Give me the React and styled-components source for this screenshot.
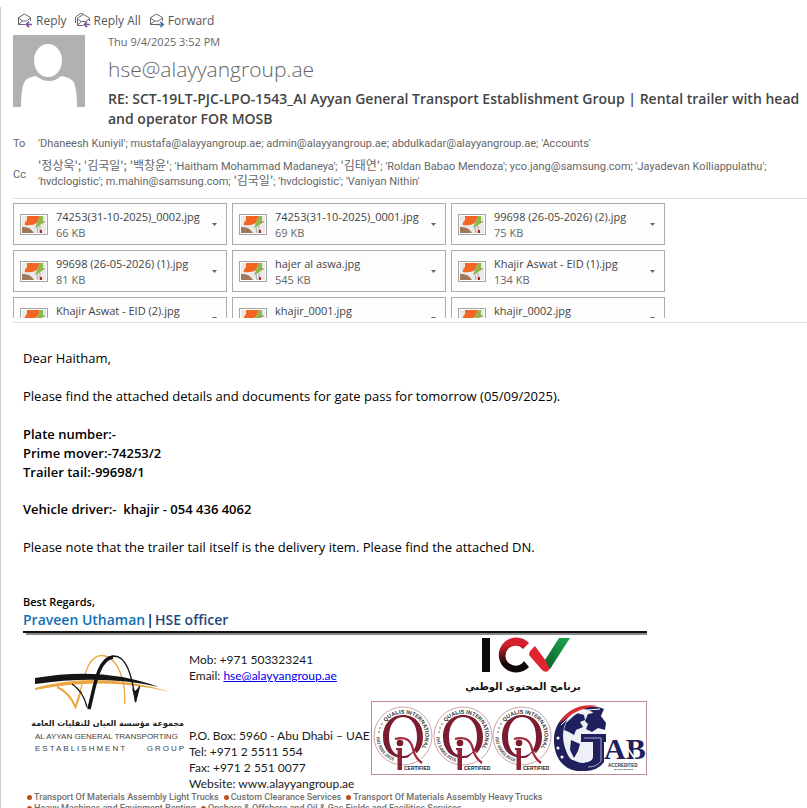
import React from "react";
import styled, { createGlobalStyle } from "styled-components";

const Global = createGlobalStyle`
  * { box-sizing: border-box; }
  body { margin: 0; background: #fff; overflow: hidden; }
  button { font: inherit; color: inherit; background: none; border: 0; padding: 0; cursor: pointer; }
`;
const ui = `"Open Sans", "Noto Sans", sans-serif`;

const Pane = styled.main`
  height: 100vh;
  overflow: hidden;
  padding-top: 7px;
  background: linear-gradient(#cfcfcf, #cfcfcf) 0 7px / 1px 100% no-repeat #fff;
  font-family: ${ui};
  color: #666;
`;
const Toolbar = styled.div`
  display: flex;
  gap: 8px;
  padding: 4px 0 0 17px;
  height: 26px;
`;
const Action = styled.button`
  display: flex;
  align-items: center;
  gap: 3px;
  height: 18px;
  && { font-size: 12px; color: #555; }
`;
const Head = styled.header`
  display: flex;
  gap: 23px;
  padding: 2px 0 0 13px;
`;
const Avatar = styled.svg`
  flex: none;
  width: 72px;
  height: 72px;
`;
const Info = styled.div`
  flex: 1;
  min-width: 0;
`;
const Stamp = styled.div`
  font-size: 11px;
  line-height: 14px;
`;
const Sender = styled.div`
  font: 300 21px/28px ${ui};
  margin: 6px 0;
`;
const Subject = styled.h1`
  margin: 0;
  font: 600 14px/20px ${ui};
  color: #444;
`;
const Recipients = styled.dl`
  display: grid;
  grid-template-columns: 25px 1fr;
  align-items: center;
  row-gap: 8px;
  margin: 0;
  padding: 7px 40px 9px 13px;
  font: 11px/15px Roboto, "Noto Sans CJK KR", sans-serif;
  dd { margin: 0; }
`;
const Korean = styled.span`
  font: 12px/0 "Noto Sans CJK KR", sans-serif;
`;
const Attachments = styled.section`
  margin-left: 13px;
  border-top: 1px solid #e1e1e1;
  border-bottom: 1px solid #e1e1e1;
  height: 125px;
  padding: 4px 0;
`;
const Files = styled.div`
  display: grid;
  grid-template-columns: repeat(3, 214px);
  gap: 5px;
  height: 115px;
  overflow: hidden;
`;
const File = styled.div`
  display: flex;
  align-items: center;
  height: 42px;
  padding: 0 9px 0 6px;
  border: 1px solid #ababab;
  background: #fdfdfd;
`;
const Thumbnail = styled.svg`
  flex: none;
  width: 28px;
  height: 21px;
`;
const FileText = styled.div`
  flex: 1;
  margin-left: 8px;
  padding-top: 2px;
  font: 11px/16px ${ui};
  white-space: nowrap;
`;
const FileName = styled.div`
  color: #444;
`;
const Menu = styled.button`
  display: flex;
`;
const Body = styled.article`
  padding: 26px 23px 0;
  font: 13px/19px ${ui};
  color: #000;
`;
const Para = styled.p`
  margin: 0 0 ${(p) => p.$after ?? 19}px;
  font-weight: ${(p) => (p.$bold ? 600 : 400)};
  white-space: pre-wrap;
`;
const Regards = styled.p`
  margin: 0;
  font: 600 11px/18px ${ui};
`;
const Signer = styled.p`
  margin: 0;
  font: 600 14px/18px ${ui};
  color: #1f497d;
`;
const SignerName = styled.span`
  color: #0f70b7;
`;
const Divider = styled.span`
  margin: 0 1px;
  color: #000;
`;
const Card = styled.section`
  max-width: 624px;
  margin-top: 2px;
  border-top: 2px solid #111;
`;
const Rule = styled.div`
  margin-left: 3px;
  border-top: 2px solid #8a8a8a;
`;
const CardRow = styled.div`
  display: grid;
  grid-template-columns: 166px 182px 1fr;
  height: 157px;
`;
const Brand = styled.div`
  padding-left: 12px;
  white-space: nowrap;
  color: #444;
  font: 8px/12px "Liberation Sans", sans-serif;
`;
const BrandMark = styled.svg`
  display: block;
  width: 140px;
  height: 82px;
`;
const BrandArabic = styled.div`
  width: 149px;
  font: 700 8px/14px "DejaVu Sans", sans-serif;
  color: #222;
`;
const BrandLetters = styled.div`
  display: flex;
  justify-content: space-between;
  width: 151px;
  letter-spacing: 2px;
`;
const Contact = styled.address`
  display: flex;
  flex-direction: column;
  justify-content: space-between;
  padding-top: 17px;
  font: 12px/16px Lato, sans-serif;
  white-space: nowrap;
  color: #1a1a1a;
  a { color: #0000ee; }
`;
const Badges = styled.svg`
  width: 276px;
  height: 156px;
`;
const Services = styled.ul`
  list-style: none;
  display: flex;
  flex-wrap: wrap;
  column-gap: 5px;
  margin: 0;
  padding: 0 0 0 4px;
  font: 500 9px/11px Roboto, sans-serif;
  color: #707070;
`;
const Service = styled.li`
  display: flex;
  align-items: center;
  gap: 2px;
  white-space: nowrap;
  &::before {
    content: "";
    width: 5px;
    height: 5px;
    border-radius: 50%;
    background: #c0501a;
  }
`;

function Envelope({ all, color, forward }) {
  return (
    <svg width="16" height="16" viewBox="0 0 16 16" fill="none" stroke="#666" aria-hidden="true">
      {all && <path d="M0.5 11V5L5.5 1.5L8.5 2" />}
      <path d={all ? "M8 13.5H2.5V6L8.5 2.5L14.5 6V9M2.5 7L6.5 9.5H10.5L14.5 7M2.5 13L6.5 9.5" : "M8 12.5H1.5V5.5L7.5 2L13.5 5.5V9M1.5 6L5.5 9H9.5L13.5 6M1.5 12.5L5.5 9"} />
      <path stroke={color} strokeWidth="1.7" d={forward ? "M8 12.5H14M11.5 9.8L14.2 12.5L11.5 15.2" : "M9.5 12.5H15M12 9.8L9.3 12.5L12 15.2"} />
    </svg>
  );
}

function Thumb() {
  return (
    <Thumbnail viewBox="0 0 28 21" aria-hidden="true">
      <rect x=".5" y=".5" width="27" height="20" fill="#fff" stroke="#a5a5a5" />
      <rect x="2" y="2" width="24" height="17" fill="#eceae8" />
      <path d="M7 2H20L17 9Q12 12 5 11Q4 9 7 6Z" fill="#f26522" />
      <path d="M20 2L23 2V9L19 12L15 14L17 9Z" fill="#8cb84a" />
      <path d="M22 8L25 7L24 9Z" fill="#a0785a" />
      <path d="M2 13Q10 12 14 19H2Z" fill="#a0785a" />
      <path d="M17 13L18 19M20 12V19" stroke="#aaa" />
      <path d="M21 16V19" stroke="#b22" strokeWidth="2" />
    </Thumbnail>
  );
}

const files = [
  ["74253(31-10-2025)_0002.jpg", "66 KB"], ["74253(31-10-2025)_0001.jpg", "69 KB"], ["99698 (26-05-2026) (2).jpg", "75 KB"],
  ["99698 (26-05-2026) (1).jpg", "81 KB"], ["hajer al aswa.jpg", "545 KB"], ["Khajir Aswat - EID (1).jpg", "134 KB"],
  ["Khajir Aswat - EID (2).jpg", ""], ["khajir_0001.jpg", ""], ["khajir_0002.jpg", ""],
];

const services = [
  "Transport Of Materials Assembly Light Trucks", "Custom Clearance Services", "Transport Of Materials Assembly Heavy Trucks",
  "Heavy Machines and Equipment Renting", "Onshore & Offshore and Oil & Gas Fields and Facilities Services",
];

function Qualis({ x, id, iso }) {
  return (
    <g transform={`translate(${x} 101)`} fontFamily="Liberation Sans" fontWeight="700">
      <circle r="29" fill="#fff" stroke="#c08a92" strokeWidth=".8" />
      <path id={`${id}a`} d="M-17 -14A22 22 0 1 1 16 15" fill="none" />
      <path id={`${id}b`} d="M-26.500 1A26.500 26.500 0 0 0 -6 26" fill="none" />
      <text fontSize="5.500" fill="#333"><textPath href={`#${id}a`}>QUALIS INTERNATIONAL</textPath></text>
      <text fontSize="4.500" fill="#444"><textPath href={`#${id}b`}>{iso}</textPath></text>
      <g fill="#555"><circle cx="-24" cy="-4" r=".8" /><circle cx="-23" cy="-8" r=".8" /><circle cx="-21" cy="-12" r=".8" /></g>
      <path fillRule="evenodd" d="M0 -21C12 -21 20 -12 20 1S12 22 0 22S-20 14 -20 1S-12 -21 0 -21M0 -19C-9 -19 -14 -10 -14 1S-9 20 0 20S14 12 14 1S9 -19 0 -19Z" fill="#7b1c31" />
      <path d="M2 24L19 24L12 15Z" fill="#fff" />
      <circle cx="-3" cy="7" r="3.300" fill="#7b1c31" />
      <path d="M-7 12H-1V34H-5.500V14H-7Z" fill="#8b2235" />
      <path d="M-8 3Q7 -1 10 13Q12 22 19 27" fill="none" stroke="#a3283a" strokeWidth="2.200" />
      <text x="1" y="34" fontSize="5" fill="#222">CERTIFIED</text>
    </g>
  );
}

function Gab() {
  return (
    <g fill="#20205e">
      <path d="M233 74C212 66 183 78 183 105C183 125 195 137 211 136C222 136 228 130 231 124V99H205V107H217V121Q201 132 196 118C188 98 205 83 229 83Z" />
      <ellipse cx="212" cy="101" rx="20" ry="27" fill="#eef0f5" />
      <path d="M195 88L206 78L213 80L214 85L209 87L212 92L205 95L203 100L198 97L193 95ZM217 79L227 77L235 88L234 95L227 93L221 97L215 94L217 89L214 86ZM200 105L209 109L207 116L203 123L199 115Z" />
      <path d="M210 99H235V107H233V127Q227 136 213 136V128Q222 127 222 122V107H210Z" />
      <path d="M213 103H230V126Q226 132 217 132" fill="none" stroke="#c9cbe0" strokeWidth=".8" />
      <path d="M188 88Q201 67 227 71Q207 73 196 83Z" fill="#d8302f" />
      <path d="M190 90Q203 74 229 74" fill="none" stroke="#fff" />
      <g fill="#fff"><circle cx="187" cy="103" r="1.500" /><circle cx="187" cy="113" r="1.500" /><circle cx="191" cy="122" r="1.500" /></g>
      <text x="233" y="124" fontSize="30" fontWeight="700" fontFamily="Liberation Serif">AB</text>
      <path d="M241 90L264 124" stroke="#fff" strokeWidth="1.500" />
      <text x="237" y="132" fontSize="4.500" fontWeight="700" fill="#333" fontFamily="Liberation Sans">ACCREDITED</text>
      <path d="M243 134.500H262" stroke="#888" strokeDasharray="2 .5" />
    </g>
  );
}

export default function App() {
  return (
    <Pane>
      <Global />
      <Toolbar>
        <Action><Envelope color="#8252a5" />Reply</Action>
        <Action><Envelope all color="#8252a5" />Reply All</Action>
        <Action><Envelope forward color="#3b7fb0" />Forward</Action>
      </Toolbar>
      <Head>
        <Avatar viewBox="0 0 72 72" role="img" aria-label="Sender">
          <path fill="#b1b1b1" d="M0 0H72V72H0Z" />
          <ellipse cx="35" cy="25.500" rx="14" ry="16.500" fill="#fff" />
          <path fill="#fff" d="M8 72Q8 52 12 46Q15 42 23 41Q29 46 36 46Q43 46 48 41Q56 42 60 46Q64 52 64 72Z" />
        </Avatar>
        <Info>
          <Stamp>Thu 9/4/2025 3:52 PM</Stamp>
          <Sender>hse@alayyangroup.ae</Sender>
          <Subject>RE: SCT-19LT-PJC-LPO-1543_AI Ayyan General Transport Establishment Group | Rental trailer with head and operator FOR MOSB</Subject>
        </Info>
      </Head>
      <Recipients>
        <dt>To</dt>
        <dd>'Dhaneesh Kuniyil'; mustafa@alayyangroup.ae; admin@alayyangroup.ae; abdulkadar@alayyangroup.ae; 'Accounts'</dd>
        <dt>Cc</dt>
        <dd>
          <Korean>'정상욱'; '김국일'; '백창윤'</Korean>; 'Haitham Mohammad Madaneya'; <Korean>'김태연'</Korean>; 'Roldan Babao Mendoza'; yco.jang@samsung.com; 'Jayadevan Kolliappulathu'; 'hvdclogistic'; m.mahin@samsung.com; <Korean>'김국일'</Korean>; 'hvdclogistic'; 'Vaniyan Nithin'
        </dd>
      </Recipients>
      <Attachments aria-label="Attachments">
        <Files>
          {files.map(([name, size]) => (
            <File key={name}>
              <Thumb />
              <FileText><FileName>{name}</FileName>{size || "\u00a0"}</FileText>
              <Menu aria-label={`Options for ${name}`}>
                <svg width="5" height="3" viewBox="0 0 5 3"><path d="M0 0H5L2.500 3Z" fill="#666" /></svg>
              </Menu>
            </File>
          ))}
        </Files>
      </Attachments>
      <Body>
        <Para>Dear Haitham,</Para>
        <Para>Please find the attached details and documents for gate pass for tomorrow (05/09/2025).</Para>
        <Para $bold $after={0}>Plate number:-</Para>
        <Para $bold $after={0}>Prime mover:-74253/2</Para>
        <Para $bold $after={18}>Trailer tail:-99698/1</Para>
        <Para $bold>Vehicle driver:-  khajir - 054 436 4062</Para>
        <Para $after={36}>Please note that the trailer tail itself is the delivery item. Please find the attached DN.</Para>
        <Regards>Best Regards,</Regards>
        <Signer><SignerName>Praveen Uthaman</SignerName><Divider>|</Divider>HSE officer</Signer>
        <Card>
          <Rule />
          <CardRow>
            <Brand>
              <BrandMark viewBox="12 0 140 82" aria-hidden="true">
                <g fill="none" stroke="#eba63f">
                  <path d="M52.500 72C60 52 62 20 79 20.500C96 22 103 48 101.500 69" strokeWidth="1.300" />
                  <path d="M34 52Q46 57 52.500 72L58 56" strokeWidth="2" />
                </g>
                <path d="M12 53Q76 35 148 57Q80 41 12 55Z" fill="#eba63f" />
                <path d="M12 43Q80 31 136 52Q80 39 12 49Z" fill="#151515" />
                <path d="M65 74C72 50 74 22 91 21C104 21 110 45 112.500 67L116.500 51M49 49Q60 56 64 72" fill="none" stroke="#151515" strokeWidth="1.300" />
                <path d="M66 74C72 50 75 24 90 22" fill="none" stroke="#151515" strokeWidth="3.500" />
                <path d="M109 53L112.500 68L117 51L112 56Z" fill="#151515" />
              </BrandMark>
              <BrandArabic lang="ar" dir="rtl">مجموعة مؤسسة العيان للنقليات العامة</BrandArabic>
              <div>AL AYYAN GENERAL TRANSPORTING</div>
              <BrandLetters><span>ESTABLISHMENT</span><span>GROUP</span></BrandLetters>
            </Brand>
            <Contact>
              <div>Mob: +971 503323241<br />Email: <a href="mailto:hse@alayyangroup.ae">hse@alayyangroup.ae</a></div>
              <div>P.O. Box: 5960 - Abu Dhabi – UAE<br />Tel: +971 2 5511 554<br />Fax: +971 2 551 0077<br />Website: www.alayyangroup.ae</div>
            </Contact>
            <Badges viewBox="0 0 276 156" role="img" aria-label="Certifications">
              <defs>
                <linearGradient id="cRed" x1="0" y1="0" x2="0" y2="1"><stop offset=".2" stopColor="#d3202c" /><stop offset=".75" stopColor="#100808" /></linearGradient>
                <linearGradient id="vGreen" x1="1" y1="0" x2="0" y2="1"><stop offset=".2" stopColor="#1c9c48" /><stop offset="1" stopColor="#0a5c2a" /></linearGradient>
              </defs>
              <path d="M111 3H119V37H111Z" fill="#0a0a0a" />
              <path d="M158 8A17.500 17.500 0 1 0 158 32L153 26A10 10 0 1 1 152 14Z" fill="url(#cRed)" />
              <path d="M159 16L164 11L175 26L181 31L177 36Q174 38 171 35L158 20Z" fill="#e02430" />
              <path d="M188 3H199L179 34L174 25Z" fill="url(#vGreen)" />
              <text x="152" y="55" textAnchor="middle" fontSize="10" fontWeight="700" fill="#111" fontFamily="DejaVu Sans" direction="rtl">برنامج المحتوى الوطني</text>
              <rect x=".5" y="66.500" width="275" height="73" fill="#fff" stroke="#c08a92" />
              <Qualis x={32} id="q1" iso="ISO 9001:2015" />
              <Qualis x={92} id="q2" iso="ISO 14001:2015" />
              <Qualis x={151} id="q3" iso="ISO 45001:2018" />
              <Gab />
            </Badges>
          </CardRow>
          <Services>{services.map((s) => <Service key={s}>{s}</Service>)}</Services>
        </Card>
      </Body>
    </Pane>
  );
}
